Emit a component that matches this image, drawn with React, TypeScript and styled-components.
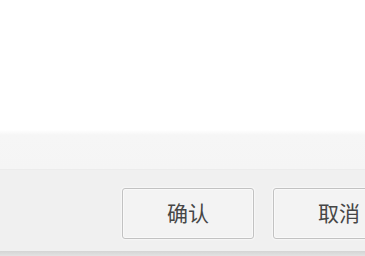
import styled, { createGlobalStyle } from "styled-components";

const GlobalStyle = createGlobalStyle`
  html, body {
    margin: 0;
    padding: 0;
    background: #ffffff;
  }
  body {
    font-family: "Microsoft YaHei", "Noto Sans CJK SC", "Liberation Sans", sans-serif;
  }
`;

export default function App() {
  return (
    <>
      <GlobalStyle />
      <Dialog>
        <Content />
        <InputEdge />
        <Footer>
          <ActionButton>确认</ActionButton>
          <ActionButton>取消</ActionButton>
        </Footer>
        <BottomEdge />
      </Dialog>
    </>
  );
}

const Dialog = styled.div`
  display: flex;
  flex-direction: column;
  width: 365px;
  height: 256px;
  overflow: hidden;
  background: #ffffff;
`;

const Content = styled.div`
  height: 130px;
  background: #ffffff;
`;

const InputEdge = styled.div`
  height: 40px;
  background: linear-gradient(to bottom, #ffffff 0px, #f6f6f6 5px, #f5f5f5 100%);
  border-bottom: 1px solid #ececec;
  box-sizing: border-box;
`;

const Footer = styled.div`
  display: flex;
  gap: 19px;
  height: 81px;
  padding: 18px 0 0 122px;
  box-sizing: border-box;
  background: #f0f0f0;
`;

const ActionButton = styled.button`
  flex-shrink: 0;
  width: 132px;
  height: 51px;
  border: 1px solid #c2c2c2;
  border-radius: 3px;
  background: #f3f3f3;
  box-shadow: inset 0 0 0 1px #f9f9f9, 0 0 1px 1px #f7f7f7;
  color: #464646;
  font-family: "Noto Sans CJK SC", "Liberation Sans", sans-serif;
  font-size: 21px;
  font-weight: 400;
  line-height: 1;
  padding: 0 0 2px;
  cursor: pointer;
`;

const BottomEdge = styled.div`
  height: 5px;
  background: linear-gradient(to bottom, #d4d4d4 0px, #dadada 2px, #e2e2e2 100%);
`;
